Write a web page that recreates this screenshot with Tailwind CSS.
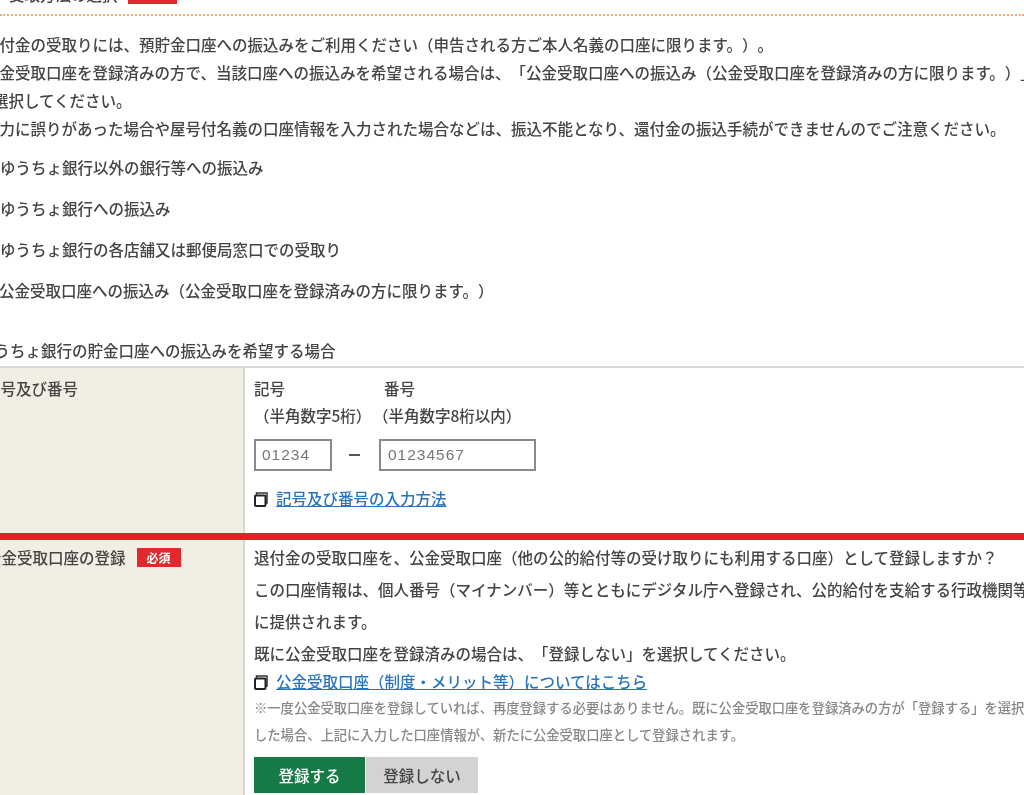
<!DOCTYPE html>
<html lang="ja">
<head>
<meta charset="utf-8">
<script src="https://cdn.jsdelivr.net/npm/@tailwindcss/browser@4"></script>
</head>
<body class="bg-white">
<div class="w-[1024px] h-[795px] overflow-hidden bg-white text-[#444] text-[15.5px] font-medium whitespace-nowrap [text-spacing-trim:space-all] font-['Noto_Sans_CJK_JP','Noto_Sans_CJK_SC',sans-serif] blur-[0.5px]">
  <div class="h-[16px] border-b-2 border-dotted border-[#f7ad70] overflow-hidden">
    <div class="-mt-[16px] flex items-start gap-[10px] ml-[9px]">
      <span class="leading-[20px] text-[15.5px]">受取方法の選択</span>
      <span class="h-[20px] w-[49px] bg-[#e0282e]"></span>
    </div>
  </div>
  <div class="pt-[14px] leading-[28px]">
    <p class="-ml-[16px]">退付金の受取りには、預貯金口座への振込みをご利用ください（申告される方ご本人名義の口座に限ります。）。</p>
    <p class="-ml-[16px]">公金受取口座を登録済みの方で、当該口座への振込みを希望される場合は、「公金受取口座への振込み（公金受取口座を登録済みの方に限ります。）」を</p>
    <p class="-ml-[7px]">選択してください。</p>
    <p class="-ml-[16px]">入力に誤りがあった場合や屋号付名義の口座情報を入力された場合などは、振込不能となり、還付金の振込手続ができませんのでご注意ください。</p>
  </div>
  <div class="pt-[5px] leading-[41px]">
    <p>ゆうちょ銀行以外の銀行等への振込み</p>
    <p>ゆうちょ銀行への振込み</p>
    <p>ゆうちょ銀行の各店舗又は郵便局窓口での受取り</p>
    <p class="-ml-[1px]">公金受取口座への振込み（公金受取口座を登録済みの方に限ります。）</p>
  </div>
  <p class="pt-[19px] -ml-[21px] leading-[40px] h-[55px]">ゆうちょ銀行の貯金口座への振込みを希望する場合</p>
  <div class="border-t-2 border-[#d8d8d8] flex h-[167px]">
    <div class="w-[245px] shrink-0 bg-[#f2eee4] border-r-2 border-[#d8d8d8] overflow-hidden">
      <p class="pt-[6px] -ml-[15px] leading-[28px]">記号及び番号</p>
    </div>
    <div class="pl-[9px] pt-[6px]">
      <div class="flex leading-[28px]"><span class="w-[130px]">記号</span><span>番号</span></div>
      <div class="flex leading-[28px] -mt-[1px]"><span class="w-[119px]">（半角数字5桁）</span><span>（半角数字8桁以内）</span></div>
      <div class="flex items-center mt-[10px]">
        <div class="w-[78px] h-[32px] border-2 border-[#8a8a8a] pl-[6px] leading-[28px] text-[#777] font-['Liberation_Sans',sans-serif] tracking-[1px]">01234</div>
        <div class="w-[11px] h-[2px] bg-[#555] ml-[17px]"></div>
        <div class="w-[157px] h-[32px] border-2 border-[#8a8a8a] pl-[7px] ml-[19px] leading-[28px] text-[#777] font-['Liberation_Sans',sans-serif] tracking-[1px]">01234567</div>
      </div>
      <div class="flex items-center mt-[13px] leading-[28px]">
        <svg class="w-[14px] h-[15px] mt-[3px]" viewBox="0 0 14 15" fill="none"><path d="M2.5 3V1H13V11H11.5" stroke="#333" stroke-width="1.5"/><rect x="1" y="3.5" width="10.5" height="10.5" rx="1" stroke="#222" stroke-width="2"/></svg>
        <a class="ml-[8px] text-[#2a75c0] underline">記号及び番号の入力方法</a>
      </div>
    </div>
  </div>
  <div class="h-[7px] bg-[#ed1c24]"></div>
  <div class="flex h-[260px]">
    <div class="w-[245px] shrink-0 bg-[#f2eee4] border-r-2 border-[#d8d8d8] overflow-hidden">
      <div class="flex items-center pt-[3px] -ml-[14px]">
        <span class="leading-[28px]">公金受取口座の登録</span>
        <span class="ml-[11px] w-[44px] h-[19px] bg-[#e0282e] text-white text-[12px] font-bold leading-[19px] text-center">必須</span>
      </div>
    </div>
    <div class="pl-[9px] pt-[1px]">
      <p class="leading-[32px]">退付金の受取口座を、公金受取口座（他の公的給付等の受け取りにも利用する口座）として登録しますか？</p>
      <p class="leading-[32px]">この口座情報は、個人番号（マイナンバー）等とともにデジタル庁へ登録され、公的給付を支給する行政機関等</p>
      <p class="leading-[32px]">に提供されます。</p>
      <p class="leading-[32px]">既に公金受取口座を登録済みの場合は、「登録しない」を選択してください。</p>
      <div class="flex items-center leading-[24px]">
        <svg class="w-[14px] h-[15px] mt-[3px]" viewBox="0 0 14 15" fill="none"><path d="M2.5 3V1H13V11H11.5" stroke="#333" stroke-width="1.5"/><rect x="1" y="3.5" width="10.5" height="10.5" rx="1" stroke="#222" stroke-width="2"/></svg>
        <a class="ml-[8px] text-[#2a75c0] underline">公金受取口座（制度・メリット等）についてはこちら</a>
      </div>
      <p class="text-[13.3px] text-[#888] leading-[27px] mt-[1px]">※一度公金受取口座を登録していれば、再度登録する必要はありません。既に公金受取口座を登録済みの方が「登録する」を選択</p>
      <p class="text-[13.3px] text-[#888] leading-[27px]">した場合、上記に入力した口座情報が、新たに公金受取口座として登録されます。</p>
      <div class="flex gap-[1px] mt-[9px]">
        <div class="w-[111px] h-[36px] bg-[#167a46] text-white text-center leading-[36px]">登録する</div>
        <div class="w-[112px] h-[36px] bg-[#d3d3d3] text-center leading-[36px]">登録しない</div>
      </div>
    </div>
  </div>
</div>
</body>
</html>
